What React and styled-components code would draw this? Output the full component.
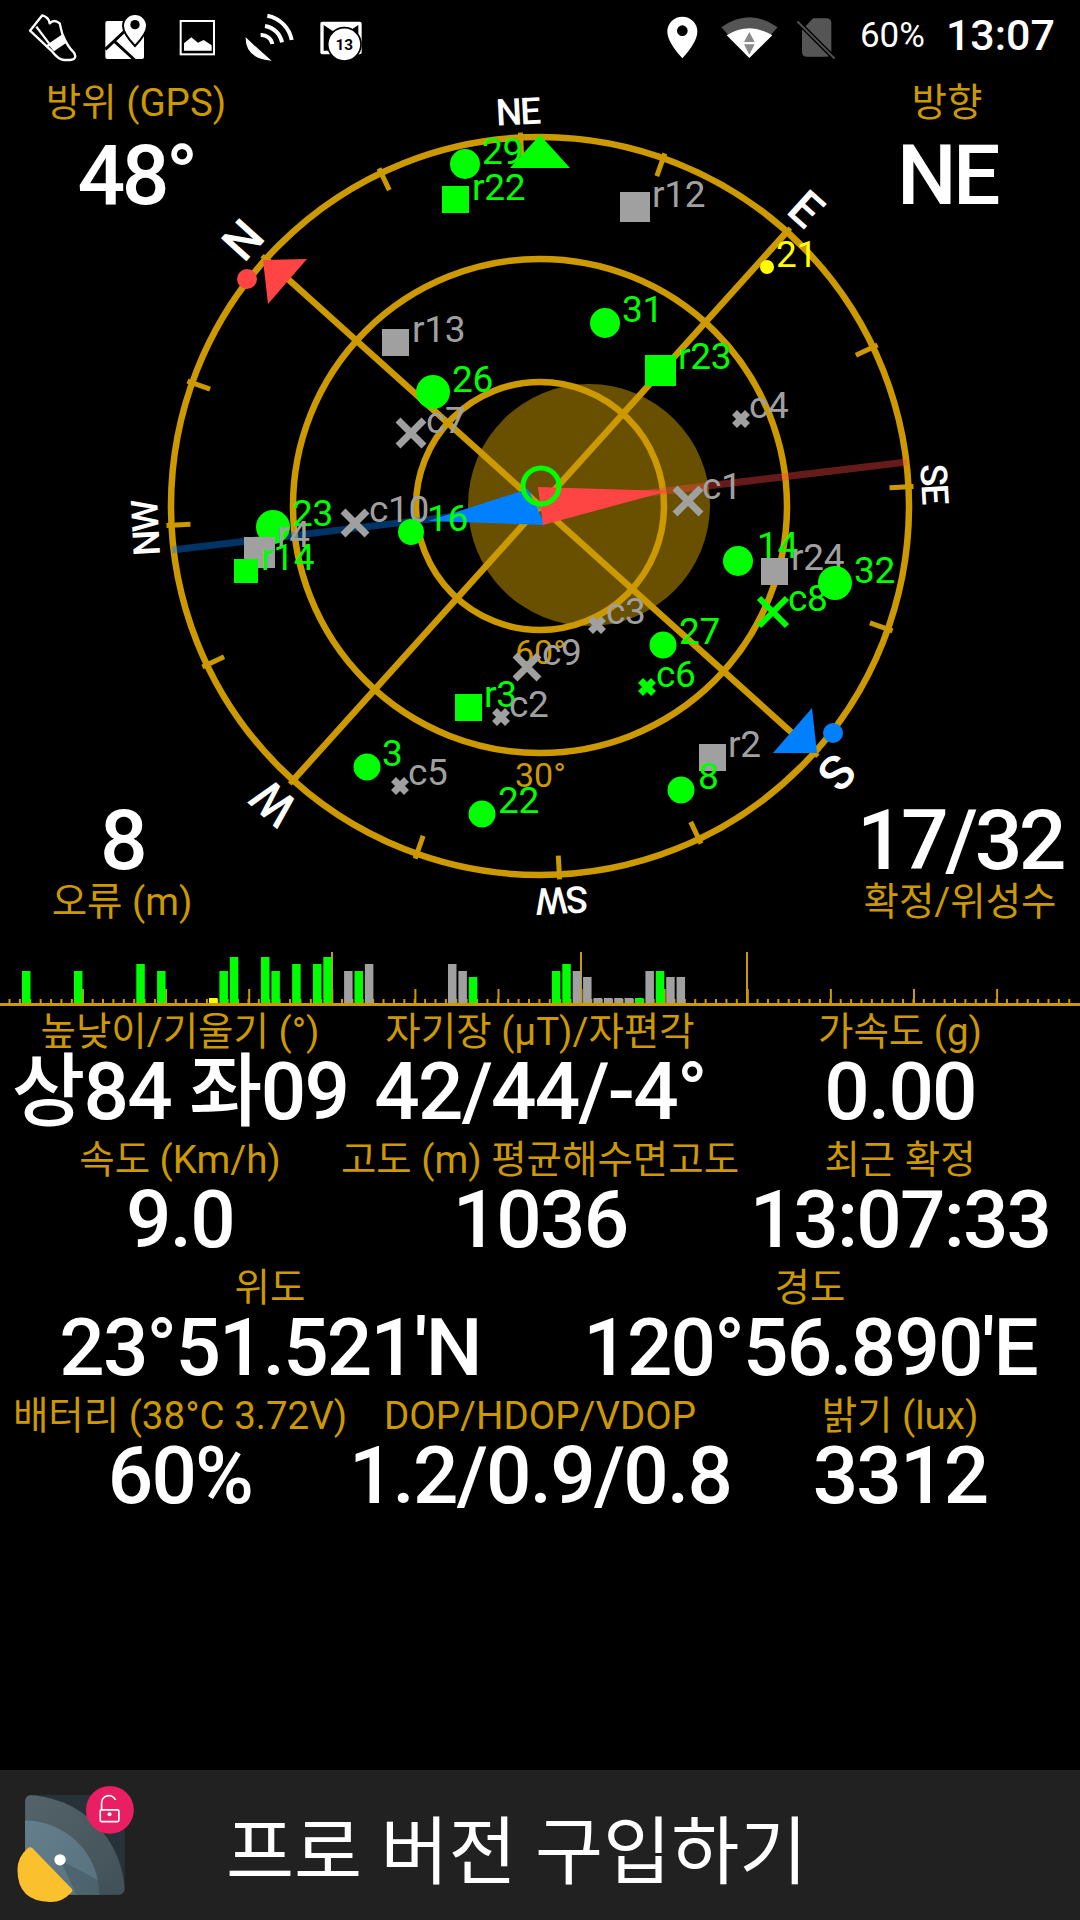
import styled, { createGlobalStyle, css } from "styled-components";

const GOLD = "#cc9900";
const GREEN = "#00ff00";
const GREY = "#a0a0a0";
const YELLOW = "#ffff00";
const RED = "#ff4444";
const BLUE = "#0080ff";

const Global = createGlobalStyle`
  html, body { margin: 0; padding: 0; background: #000; }
  body { font-family: Roboto, "Noto Sans CJK KR", sans-serif; }
`;

const Page = styled.div`
  width: 1080px;
  height: 1920px;
  display: flex;
  flex-direction: column;
  background: #000;
  overflow: hidden;
`;

/* status bar */
const StatusBar = styled.div`
  height: 70px;
  display: flex;
  justify-content: space-between;
  align-items: center;
  padding: 0 25px 0 17px;
  color: #fff;
`;
const StatusGroup = styled.div`
  display: flex;
  align-items: center;
`;
const StatusIcon = styled.svg`
  display: block;
  width: ${(p) => p.$w}px;
  height: 70px;
`;
const Battery = styled.span`
  font-size: 35px;
  font-weight: 400;
  margin-left: 10px;
`;
const Clock = styled.span`
  font-size: 43px;
  font-weight: 500;
  margin-left: 21px;
`;

/* compass */
const CompassArea = styled.div`
  position: relative;
  height: 860px;
`;
const CompassSvg = styled.svg`
  display: block;
  width: 1080px;
  height: 860px;
  font-family: Roboto, sans-serif;
`;
const corners = {
  tl: css`top: 11px; left: 16px;`,
  tr: css`top: 11px; right: 13px;`,
  bl: css`bottom: 6px; left: 2px;`,
  br: css`bottom: 6px; right: 0;`,
};
const Corner = styled.div`
  position: absolute;
  width: 240px;
  display: flex;
  flex-direction: column;
  align-items: center;
  ${(p) => corners[p.$at]}
  & > * + * {
    margin-top: ${(p) => p.$gap}px;
  }
`;
const Label = styled.div`
  height: 44px;
  line-height: 44px;
  font-size: 38.5px;
  color: ${GOLD};
  white-space: nowrap;
`;
const BigValue = styled.div`
  height: 90px;
  line-height: 90px;
  font-size: 84px;
  font-weight: 500;
  letter-spacing: -3.5px;
  color: #fff;
  white-space: nowrap;
`;

/* signal bars */
const BarChart = styled.svg`
  display: block;
  width: 1080px;
  height: 76px;
`;

/* readouts */
const Readouts = styled.div`
  margin-top: 4px;
  display: flex;
  flex-direction: column;
`;
const ReadoutRow = styled.div`
  display: grid;
  grid-template-columns: repeat(${(p) => p.$cols}, 1fr);
  height: 128px;
`;
const Cell = styled.div`
  display: flex;
  flex-direction: column;
  align-items: center;
  min-width: 0;
`;
const Value = styled.div`
  height: 83px;
  margin-top: -3px;
  line-height: 83px;
  font-size: 80px;
  font-weight: 500;
  letter-spacing: -1.8px;
  color: #fff;
  white-space: nowrap;
`;

/* bottom banner */
const Banner = styled.div`
  margin-top: auto;
  height: 150px;
  background: #212121;
  display: flex;
  align-items: flex-start;
  padding-top: 10px;
  box-sizing: border-box;
`;
const BannerText = styled.div`
  margin-left: 86px;
  height: 130px;
  line-height: 146px;
  font-size: 74px;
  color: #fff;
  white-space: nowrap;
`;

const CX = 540;
const CY = 506;
const ROT = -48;

const DIRS = [
  ["N", 0, 48],
  ["NE", 45, 37],
  ["E", 90, 48],
  ["SE", 135, 37],
  ["S", 180, 48],
  ["SW", 225, 37],
  ["W", 270, 48],
  ["NW", 315, 37],
];

const SATS = [
  { t: "dot", x: 465, y: 164, s: 15, c: GREEN, l: "29", lx: 483, ly: 164 },
  { t: "sq", x: 442, y: 186, s: 27, c: GREEN, l: "r22", lx: 473, ly: 200 },
  { t: "sq", x: 620, y: 192, s: 30, c: GREY, l: "r12", lx: 653, ly: 207 },
  { t: "dot", x: 767, y: 267, s: 7, c: YELLOW, l: "21", lx: 777, ly: 267 },
  { t: "dot", x: 605, y: 323, s: 15, c: GREEN, l: "31", lx: 623, ly: 322 },
  { t: "sq", x: 382, y: 329, s: 27, c: GREY, l: "r13", lx: 413, ly: 342 },
  { t: "sq", x: 645, y: 355, s: 31, c: GREEN, l: "r23", lx: 679, ly: 369 },
  { t: "dot", x: 433, y: 392, s: 17, c: GREEN, l: "26", lx: 453, ly: 392 },
  { t: "x", x: 411, y: 433, s: 13, w: 7, c: GREY, l: "c7", lx: 427, ly: 433 },
  { t: "x", x: 741, y: 419, s: 6.5, w: 7, c: GREY, l: "c4", lx: 750, ly: 418 },
  { t: "x", x: 688, y: 501, s: 13, w: 7, c: GREY, l: "c1", lx: 703, ly: 499 },
  { t: "dot", x: 273, y: 527, s: 17, c: GREEN, l: "23", lx: 293, ly: 526 },
  { t: "sq", x: 244, y: 537, s: 31, c: GREY, l: "r4", lx: 278, ly: 547 },
  { t: "sq", x: 234, y: 559, s: 24, c: GREEN, l: "r14", lx: 262, ly: 570 },
  { t: "x", x: 355, y: 523, s: 12, w: 7, c: GREY, l: "c10", lx: 370, ly: 522 },
  { t: "dot", x: 411, y: 532, s: 13, c: GREEN, l: "16", lx: 428, ly: 531 },
  { t: "dot", x: 738, y: 561, s: 15, c: GREEN, l: "14", lx: 758, ly: 558 },
  { t: "sq", x: 761, y: 558, s: 27, c: GREY, l: "r24", lx: 792, ly: 570 },
  { t: "dot", x: 835, y: 583, s: 17, c: GREEN, l: "32", lx: 855, ly: 583 },
  { t: "x", x: 773, y: 612, s: 14, w: 6, c: GREEN, l: "c8", lx: 789, ly: 611 },
  { t: "x", x: 597, y: 625, s: 6.5, w: 7, c: GREY, l: "c3", lx: 607, ly: 624 },
  { t: "dot", x: 663, y: 645, s: 13.5, c: GREEN, l: "27", lx: 680, ly: 644 },
  { t: "x", x: 527, y: 667, s: 12, w: 7, c: GREY, l: "c9", lx: 543, ly: 665 },
  { t: "x", x: 647, y: 687, s: 6.5, w: 7, c: GREEN, l: "c6", lx: 657, ly: 687 },
  { t: "sq", x: 455, y: 694, s: 27, c: GREEN, l: "r3", lx: 485, ly: 707 },
  { t: "x", x: 501, y: 717, s: 6.5, w: 7, c: GREY, l: "c2", lx: 510, ly: 717 },
  { t: "dot", x: 367, y: 767, s: 13.5, c: GREEN, l: "3", lx: 383, ly: 766 },
  { t: "x", x: 400, y: 786, s: 6.5, w: 7, c: GREY, l: "c5", lx: 409, ly: 785 },
  { t: "dot", x: 482, y: 814, s: 13.5, c: GREEN, l: "22", lx: 499, ly: 813 },
  { t: "sq", x: 699, y: 744, s: 27, c: GREY, l: "r2", lx: 729, ly: 757 },
  { t: "dot", x: 681, y: 790, s: 13.5, c: GREEN, l: "8", lx: 699, ly: 789 },
];

// index in 10.39px slots, height in px above the baseline
const BARS = [
  [2, 33, GREEN], [7, 33, GREEN], [13, 40, GREEN], [15, 33, GREEN], [20, 6, YELLOW],
  [21, 33, GREEN], [22, 47, GREEN], [25, 47, GREEN], [26, 33, GREEN], [28, 40, GREEN],
  [30, 40, GREEN], [31, 47, GREEN], [33, 33, GREY], [34, 33, GREEN], [35, 40, GREY],
  [43, 40, GREY], [44, 33, GREY], [45, 27, GREEN], [53, 33, GREEN], [54, 40, GREEN],
  [55, 33, GREY], [56, 27, GREY], [57, 6, GREY], [58, 6, GREY], [59, 6, GREY],
  [60, 6, GREY], [61, 6, GREEN], [62, 33, GREY], [63, 33, GREEN], [64, 27, GREY], [65, 27, GREY],
];

const Satellite = ({ sat }) => {
  const { t, x, y, s, w, c, l, lx, ly } = sat;
  return (
    <g>
      {t === "dot" && <circle cx={x} cy={y} r={s} fill={c} />}
      {t === "sq" && <rect x={x} y={y} width={s} height={s} fill={c} />}
      {t === "x" && (
        <path
          d={`M${x - s} ${y - s}L${x + s} ${y + s}M${x + s} ${y - s}L${x - s} ${y + s}`}
          stroke={c}
          strokeWidth={w}
        />
      )}
      <text x={lx - 1} y={ly} fontSize="37" letterSpacing="-0.3" fill={c}>
        {l}
      </text>
    </g>
  );
};

const Compass = () => {
  const ticks = Array.from({ length: 16 }, (_, i) => i * 22.5);
  return (
    <CompassSvg viewBox="0 70 1080 860">
      <circle cx="589" cy="505" r="121" fill="#685000" />
      <g fill="none" stroke={GOLD} strokeWidth="6.5">
        <circle cx={CX} cy={CY} r="369" />
        <circle cx={CX} cy={CY} r="247" />
        <circle cx={CX} cy={CY} r="124" />
      </g>
      <g transform={`rotate(${ROT} ${CX} ${CY})`}>
        <path d={`M${CX} ${CY - 370}V${CY + 370}M${CX - 370} ${CY}H${CX + 370}`} stroke={GOLD} strokeWidth="6.5" />
        {ticks.map((a) => (
          <line
            key={a}
            x1={CX}
            y1={CY - 374}
            x2={CX}
            y2={CY - 350}
            stroke={GOLD}
            strokeWidth="5"
            transform={`rotate(${a} ${CX} ${CY})`}
          />
        ))}
        {DIRS.map(([name, a, size]) => (
          <text
            key={name}
            x={CX - 2}
            y={CY - 382}
            fontSize={size}
            fontWeight="500"
            letterSpacing="-2"
            fill="#fff"
            textAnchor="middle"
            transform={`rotate(${a} ${CX} ${CY})`}
          >
            {name}
          </text>
        ))}
      </g>
      <line x1={CX} y1={CY} x2="907" y2="462" stroke={RED} strokeWidth="7" opacity="0.4" />
      <line x1={CX} y1={CY} x2="172" y2="550" stroke={BLUE} strokeWidth="7" opacity="0.4" />
      <polygon points="528,489 545,525 428,521" fill={BLUE} />
      <polygon points="538,487 543,525 668,491" fill={RED} />
      <text x="515" y="664" fontSize="34" fill={GOLD}>60°</text>
      <text x="515" y="787" fontSize="34" fill={GOLD}>30°</text>
      <polygon points="263,260 307,259 268,304" fill={RED} />
      <circle cx="247" cy="279" r="10" fill={RED} />
      {SATS.map((s) => (
        <Satellite key={s.l} sat={s} />
      ))}
      <polygon points="540,135 510,168 570,168" fill={GREEN} />
      <polygon points="812,708 817,753 773,753" fill={BLUE} />
      <circle cx="833" cy="733" r="10" fill={BLUE} />
      <circle cx="541" cy="486" r="18" fill="none" stroke={GREEN} strokeWidth="5" />
    </CompassSvg>
  );
};

const SignalBars = () => {
  const base = 74;
  const small = Array.from({ length: 103 }, (_, i) => 9.5 + i * 10.39);
  const mid = Array.from({ length: 12 }, (_, i) => 83 + i * 83.1);
  return (
    <BarChart viewBox="0 0 1080 76">
      {small.map((x) => (
        <line key={x} x1={x} x2={x} y1={base - 5} y2={base} stroke={GOLD} strokeWidth="2" />
      ))}
      {mid.map((x) => (
        <line key={x} x1={x} x2={x} y1={base - 15} y2={base} stroke={GOLD} strokeWidth="2" />
      ))}
      {[332, 581, 747].map((x) => (
        <line key={x} x1={x} x2={x} y1={base - 52} y2={base} stroke={GOLD} strokeWidth="2" />
      ))}
      {BARS.map(([i, h, c]) => (
        <rect key={i} x={22 + (i - 2) * 10.39} y={base - h} width="8.5" height={h} fill={c} />
      ))}
      <rect x="0" y={base - 1} width="1080" height="3" fill={GOLD} />
    </BarChart>
  );
};

const StatusLeft = () => (
  <StatusGroup>
    <StatusIcon $w={72} viewBox="54 -30 216 210">
      <path
        d="M93 62 L130 16 Q150 22 152 40 Q165 26 182 40 Q186 58 190 72 Q205 110 225 128 Q236 148 214 150 H195 Q178 148 160 125 Z"
        fill="none"
        stroke="#fff"
        strokeWidth="7"
        strokeLinejoin="round"
      />
      <path d="M112 50 L150 100 M145 108 L192 76" fill="none" stroke="#fff" strokeWidth="7" />
      <path d="M148 104 L190 76 L200 100 L165 124 Z" fill="#fff" />
    </StatusIcon>
    <StatusIcon $w={72} viewBox="271 -30 216 210">
      <rect x="320" y="33" width="116" height="114" rx="6" fill="#fff" />
      <path d="M320 118 L388 54 M345 92 L408 150" stroke="#000" strokeWidth="9" fill="none" />
      <path d="M373 48 A36 36 0 0 1 445 48 Q445 70 409 108 Q373 70 373 48 Z" fill="#fff" stroke="#000" strokeWidth="6" />
      <circle cx="409" cy="44" r="14" fill="#000" />
    </StatusIcon>
    <StatusIcon $w={72} viewBox="484 -30 216 210">
      <rect x="543" y="33" width="100" height="100" fill="none" stroke="#fff" strokeWidth="6" />
      <path d="M553 122 V100 L575 82 L595 98 L612 90 L636 106 V122 Z" fill="#fff" />
    </StatusIcon>
    <StatusIcon $w={72} viewBox="702 -30 216 210">
      <path d="M805 17 A91 91 0 0 1 878 90 M798 48 A62 62 0 0 1 849 97 M785 75 A33 33 0 0 1 820 102" fill="none" stroke="#fff" strokeWidth="12" />
      <path d="M740 82 Q738 146 818 152 Q778 118 740 82 Z" fill="#fff" />
    </StatusIcon>
    <StatusIcon $w={72} viewBox="918 -30 216 210">
      <rect x="964" y="35" width="124" height="98" rx="6" fill="#fff" />
      <path d="M974 45 L1000 62 H1052 L1078 45 V122 H974 Z" fill="#000" />
      <circle cx="1036" cy="103" r="50" fill="#fff" stroke="#000" strokeWidth="5" />
      <text x="1036" y="120" fontSize="46" fontWeight="700" fontFamily="Roboto" textAnchor="middle" fill="#000">13</text>
    </StatusIcon>
  </StatusGroup>
);

const StatusRight = () => (
  <StatusGroup>
    <StatusIcon $w={67} viewBox="30 0 201 210">
      <path fillRule="evenodd" d="M85 95 A45 45 0 0 1 175 95 Q175 125 130 175 Q85 125 85 95 Z M130 76 A16 16 0 1 0 130 108 A16 16 0 1 0 130 76 Z" fill="#fff" />
    </StatusIcon>
    <StatusIcon $w={67} viewBox="232 0 201 210">
      <path d="M332 174 L248 82 Q332 22 417 82 Z" fill="#555" />
      <path d="M332 174 L264 106 Q332 64 401 106 Z" fill="#fff" />
      <path d="M332 96 L316 126 H348 Z M316 133 H348 L332 164 Z" fill="#8a8a8a" />
    </StatusIcon>
    <StatusIcon $w={67} viewBox="435 0 201 210">
      <path d="M492 90 L525 55 H565 Q580 55 580 70 V155 Q580 170 565 170 H507 Q492 170 492 155 Z" fill="#555" />
      <line x1="470" y1="56" x2="592" y2="178" stroke="#000" strokeWidth="14" />
      <line x1="478" y1="64" x2="590" y2="176" stroke="#555" strokeWidth="6" />
    </StatusIcon>
    <Battery>60%</Battery>
    <Clock>13:07</Clock>
  </StatusGroup>
);

const Logo = () => (
  <svg width="140" height="133" viewBox="0 60 420 400">
    <defs>
      <linearGradient id="lgOuter" x1="0" y1="0" x2="1" y2="1">
        <stop offset="0" stopColor="#5f6d73" />
        <stop offset="1" stopColor="#37474f" />
      </linearGradient>
      <linearGradient id="lgInner" x1="0" y1="0" x2="1" y2="1">
        <stop offset="0" stopColor="#6d8592" />
        <stop offset="1" stopColor="#4f6a77" />
      </linearGradient>
      <clipPath id="lgClip">
        <rect x="75" y="105" width="300" height="300" rx="18" />
      </clipPath>
    </defs>
    <g clipPath="url(#lgClip)">
      <rect x="75" y="105" width="300" height="300" fill="#263238" />
      <circle cx="75" cy="405" r="300" fill="url(#lgOuter)" />
      <circle cx="75" cy="405" r="223" fill="url(#lgInner)" />
      <path d="M180 300 L375 405 H230 Z" fill="#3d4f58" opacity="0.45" />
    </g>
    <circle cx="180" cy="300" r="17" fill="#fff" />
    <path d="M82 266 Q90 258 98 266 L216 388 Q220 394 214 398 Q186 428 150 427 Q52 425 52 330 Q52 292 82 266 Z" fill="#fbc02d" />
    <circle cx="330" cy="150" r="72" fill="#e91e63" />
    <rect x="301" y="150" width="56" height="35" rx="4" fill="none" stroke="#fff" strokeWidth="5" />
    <circle cx="329" cy="163" r="6" fill="#fff" />
    <path d="M305 148 V130 A22 22 0 0 1 347 120" fill="none" stroke="#fff" strokeWidth="5" />
  </svg>
);

const READOUTS = [
  [["높낮이/기울기 (°)", "상84 좌09"], ["자기장 (µT)/자편각", "42/44/-4°"], ["가속도 (g)", "0.00"]],
  [["속도 (Km/h)", "9.0"], ["고도 (m) 평균해수면고도", "1036"], ["최근 확정", "13:07:33"]],
  [["위도", "23°51.521'N"], ["경도", "120°56.890'E"]],
  [["배터리 (38°C 3.72V)", "60%"], ["DOP/HDOP/VDOP", "1.2/0.9/0.8"], ["밝기 (lux)", "3312"]],
];

const App = () => (
  <Page>
    <Global />
    <StatusBar>
      <StatusLeft />
      <StatusRight />
    </StatusBar>
    <CompassArea>
      <Compass />
      <Corner $at="tl" $gap={6}>
        <Label>방위 (GPS)</Label>
        <BigValue>48°</BigValue>
      </Corner>
      <Corner $at="tr" $gap={6}>
        <Label>방향</Label>
        <BigValue>NE</BigValue>
      </Corner>
      <Corner $at="bl" $gap={-6}>
        <BigValue>8</BigValue>
        <Label>오류 (m)</Label>
      </Corner>
      <Corner $at="br" $gap={-6}>
        <BigValue>17/32</BigValue>
        <Label>확정/위성수</Label>
      </Corner>
    </CompassArea>
    <SignalBars />
    <Readouts>
      {READOUTS.map((row) => (
        <ReadoutRow key={row[0][0]} $cols={row.length}>
          {row.map(([label, value]) => (
            <Cell key={label}>
              <Label>{label}</Label>
              <Value>{value}</Value>
            </Cell>
          ))}
        </ReadoutRow>
      ))}
    </Readouts>
    <Banner>
      <Logo />
      <BannerText>프로 버전 구입하기</BannerText>
    </Banner>
  </Page>
);

export default App;
